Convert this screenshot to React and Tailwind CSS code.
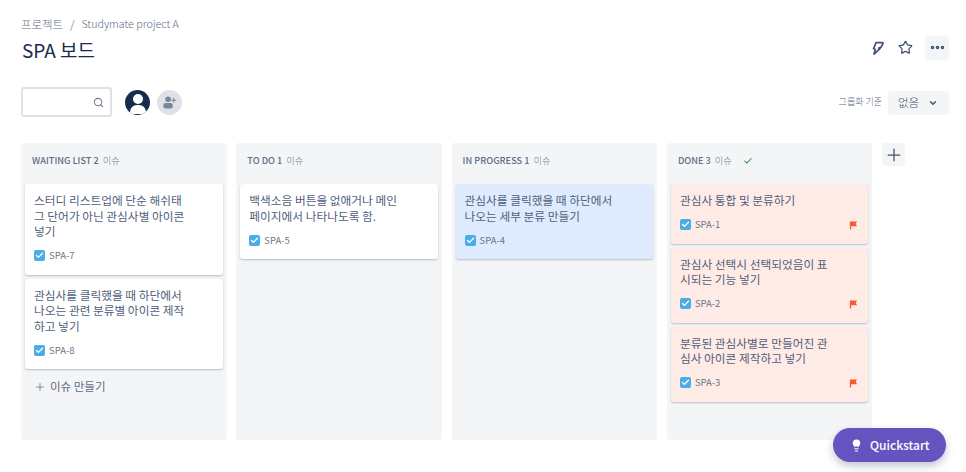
import React from 'react';
import { Search, Plus, Check, ChevronDown, Lightbulb, Star, Ellipsis } from 'lucide-react';

const FONT = 'font-["Noto_Sans_CJK_KR","Noto_Sans",sans-serif]';

const columns = [
  {
    title: 'WAITING LIST 2',
    create: true,
    cards: [
      { id: 'SPA-7', lines: ['스터디 리스트업에 단순 해쉬태', '그 단어가 아닌 관심사별 아이콘', '넣기'] },
      { id: 'SPA-8', lines: ['관심사를 클릭했을 때 하단에서', '나오는 관련 분류별 아이콘 제작', '하고 넣기'] },
    ],
  },
  {
    title: 'TO DO 1',
    cards: [{ id: 'SPA-5', lines: ['백색소음 버튼을 없애거나 메인', '페이지에서 나타나도록 함.'] }],
  },
  {
    title: 'IN PROGRESS 1',
    cards: [{ id: 'SPA-4', tone: 'blue', lines: ['관심사를 클릭했을 때 하단에서', '나오는 세부 분류 만들기'] }],
  },
  {
    title: 'DONE 3',
    done: true,
    cards: [
      { id: 'SPA-1', tone: 'red', flag: true, lines: ['관심사 통합 및 분류하기'] },
      { id: 'SPA-2', tone: 'red', flag: true, lines: ['관심사 선택시 선택되었음이 표', '시되는 기능 넣기'] },
      { id: 'SPA-3', tone: 'red', flag: true, lines: ['분류된 관심사별로 만들어진 관', '심사 아이콘 제작하고 넣기'] },
    ],
  },
];

function Card({ card }) {
  const bg = card.tone === 'blue' ? 'bg-[#deebff]' : card.tone === 'red' ? 'bg-[#ffebe6]' : 'bg-white';
  return (
    <div className={`${bg} rounded-[3px] shadow-[0_1px_2px_rgba(9,30,66,0.25)] pl-[9px] pr-[10px] pt-[8px] pb-[13px]`}>
      <div className="text-[11.7px] leading-[15.5px] font-normal text-[#505f79] whitespace-nowrap">
        {card.lines.map((line) => (
          <div key={line}>{line}</div>
        ))}
      </div>
      <div className="flex items-center mt-[11px] h-[12px]">
        <span className="w-[11px] h-[11px] rounded-[2px] bg-[#4bade8] flex items-center justify-center">
          <Check size={9} strokeWidth={3.5} className="text-white" />
        </span>
        <span className="ml-1 text-[9.5px] text-[#6b778c]">{card.id}</span>
        {card.flag && (
          <svg viewBox="0 0 10 10" className="ml-auto w-[9px] h-[10px] text-[#ff5630]" fill="currentColor">
            <path d="M1 1h8L7.4 3.7 9 6.4H2.4V10H1z" />
          </svg>
        )}
      </div>
    </div>
  );
}

function Column({ column }) {
  return (
    <div className="w-[205.5px] h-[297px] bg-[#f4f5f7] rounded-[3px] px-1 shrink-0">
      <div className="h-[41px] pl-[7px] pt-[11px] flex items-start text-[9.2px] leading-[13px] text-[#5e6c84]">
        <span className="font-medium">{column.title}</span>
        <span className="ml-1 font-light text-[#6b778c]">이슈</span>
        {column.done && <Check size={10} strokeWidth={2.5} className="ml-[11px] mt-[2px] text-[#2f8f5f]" />}
      </div>
      <div className="flex flex-col gap-[4px]">
        {column.cards.map((card) => (
          <Card key={card.id} card={card} />
        ))}
      </div>
      {column.create && (
        <div className="flex items-center mt-[9px] pl-[9px] text-[11.5px] text-[#5e6c84]">
          <Plus size={12} strokeWidth={1.5} />
          <span className="ml-1">이슈 만들기</span>
        </div>
      )}
    </div>
  );
}

export default function App() {
  return (
    <div className={`${FONT} relative w-[966px] h-[472px] overflow-hidden bg-white px-[21px] pt-[15px]`}>
      <div className="flex items-center text-[11.4px] leading-[18px] font-light text-[#5e6c84]">
        <span>프로젝트</span>
        <span className="mx-[7px]">/</span>
        <span className="text-[10.7px]">Studymate project A</span>
      </div>

      <div className="flex items-center justify-between h-[28px] mt-[3px] -mr-[4px]">
        <h1 className="text-[19px] font-normal text-[#172b4d] ml-[1px]">SPA 보드</h1>
        <div className="flex items-center -mt-[5px]">
          <svg viewBox="0 0 16 16" className="w-[15px] h-[16px] mr-[13px] text-[#42526e]" fill="none" stroke="currentColor" strokeWidth="1.8" strokeLinejoin="round">
            <path d="M6.5 2.2h6.6c.8 0 1 .6.7 1.2L12 6.8l-2.8 1.4 1.7.3-6.6 6 1.3-5.2-1.9-.5z" />
          </svg>
          <Star size={15} strokeWidth={2} className="text-[#42526e] mr-[12px]" />
          <span className="w-[24px] h-[24px] rounded-[3px] bg-[#f4f5f7] flex items-center justify-center">
            <Ellipsis size={17} strokeWidth={3} className="text-[#42526e]" />
          </span>
        </div>
      </div>

      <div className="flex items-center mt-[23px] h-[30px] -mr-[4px]">
        <div className="w-[91px] h-[30px] bg-white border-2 border-[#dfe1e6] rounded-[3px] flex items-center justify-end pr-[6px]">
          <Search size={11} strokeWidth={2.2} className="text-[#6b778c]" />
        </div>
        <span className="ml-[13px] w-[25px] h-[25px] rounded-full bg-[#172b4d] overflow-hidden flex flex-col items-center">
          <span className="mt-[4px] w-[10px] h-[10px] rounded-full bg-white" />
          <span className="mt-[1px] w-[16px] h-[9px] rounded-t-[7px] bg-white" />
        </span>
        <span className="ml-[7px] w-[25px] h-[25px] rounded-full bg-[#dfe1e6] flex items-center justify-center">
          <svg viewBox="0 0 16 16" className="w-[15px] h-[15px] text-[#7a869a]" fill="currentColor">
            <circle cx="6.5" cy="4.5" r="3" />
            <rect x="1.5" y="8.5" width="10" height="6" rx="2.5" />
            <path d="M12 3h1v2h2v1h-2v2h-1V6h-2V5h2z" />
          </svg>
        </span>
        <span className="ml-auto text-[9px] font-light text-[#5e6c84]">그룹화 기준</span>
        <span className="ml-[6px] mt-[2px] w-[61px] h-[24px] rounded-[3px] bg-[#f4f5f7] flex items-center pl-[10px] text-[11.5px] font-light text-[#42526e]">
          없음
          <ChevronDown size={10} strokeWidth={3.5} className="ml-[9px] text-[#42526e]" />
        </span>
      </div>

      <div className="flex items-start gap-[9.8px] mt-[26px]">
        {columns.map((column) => (
          <Column key={column.title} column={column} />
        ))}
        <span className="w-[23px] h-[23px] rounded-[3px] bg-[#f4f5f7] flex items-center justify-center">
          <Plus size={20} strokeWidth={1.5} className="text-[#42526e]" />
        </span>
      </div>

      <div className="absolute left-[833px] top-[428px] w-[113px] h-[34px] rounded-full bg-[#6554c0] shadow-[0_4px_8px_rgba(9,30,66,0.25)] flex items-center pl-[17px] text-white text-[12px] font-medium">
        <Lightbulb size={13} fill="white" strokeWidth={2} />
        <span className="ml-[7px]">Quickstart</span>
      </div>
    </div>
  );
}
